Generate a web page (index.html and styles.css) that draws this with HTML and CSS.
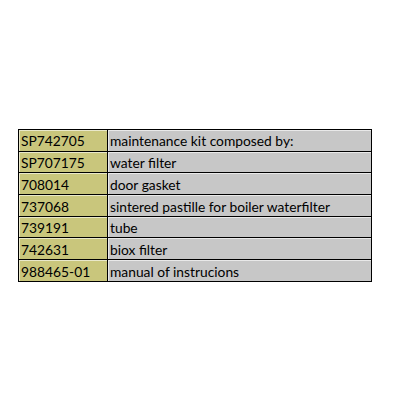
FILE: index.html
```html
<!DOCTYPE html>
<html>
<head>
<meta charset="utf-8">
<link rel="stylesheet" href="styles.css">
</head>
<body>
<table class="parts">
<tr><td class="code">SP742705</td><td class="desc">maintenance kit composed by:</td></tr>
<tr><td class="code">SP707175</td><td class="desc">water filter</td></tr>
<tr><td class="code">708014</td><td class="desc">door gasket</td></tr>
<tr><td class="code">737068</td><td class="desc">sintered pastille for boiler waterfilter</td></tr>
<tr><td class="code">739191</td><td class="desc">tube</td></tr>
<tr><td class="code">742631</td><td class="desc">biox filter</td></tr>
<tr><td class="code">988465-01</td><td class="desc">manual of instrucions</td></tr>
</table>
</body>
</html>
```
FILE: styles.css
```css
html, body {
  margin: 0;
  padding: 0;
  background: #fff;
}
body {
  padding: 129px 0 0 18px;
}
.parts {
  border-collapse: collapse;
  font-family: Lato, "Liberation Sans", sans-serif;
  font-size: 13.8px;
  color: #000;
}
.parts td {
  border: 1px solid #000;
  height: 21.7px;
  padding: 2px 0 0 2px;
  box-sizing: border-box;
  vertical-align: middle;
  white-space: nowrap;
  box-shadow: inset 1px 1px 0 rgba(255,255,255,0.6);
  line-height: 1;
}
.code {
  width: 89px;
  background: #c9c67c;
}
.desc {
  width: 264px;
  background: #c7c7c7;
}
```
